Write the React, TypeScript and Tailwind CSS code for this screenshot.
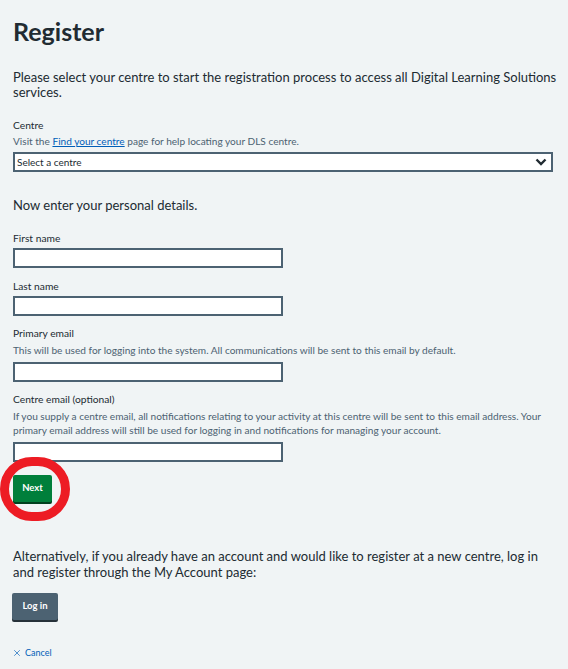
import React from 'react';
import { X } from 'lucide-react';

const font = { fontFamily: 'Lato, "Noto Sans", Arial, sans-serif' };

const Field: React.FC<{ label: string; hint?: string; gap: string }> = ({ label, hint, gap }) => (
  <div className={gap}>
    <label className="block text-[10.25px] leading-[14px] text-[#212b32]">{label}</label>
    {hint && <p className="mt-[3px] text-[10.1px] leading-[14px] text-[#4c6272]">{hint}</p>}
    <input className={`${hint ? 'mt-[5px]' : 'mt-[3px]'} block h-[20px] w-[270px] border-2 border-[#4c6272] bg-white`} />
  </div>
);

export default function App() {
  return (
    <div className="min-h-[669px] bg-[#f0f4f5] px-[13px] pt-[15px] text-[#212b32]" style={font}>
      <h1 className="text-[25px] font-bold leading-[32px]">Register</h1>

      <p className="mt-[23px] w-[548px] text-[13px] leading-[15px]">
        Please select your centre to start the registration process to access all Digital Learning Solutions
        services.
      </p>

      {/* Centre */}
      <div className="mt-[18px]">
        <label className="block text-[10.25px] leading-[14px]">Centre</label>
        <p className="mt-[2px] text-[10.1px] leading-[14px] text-[#4c6272]">
          Visit the{' '}
          <a href="#" className="text-[#005eb8] underline">
            Find your centre
          </a>{' '}
          page for help locating your DLS centre.
        </p>
        <div className="mt-[4px] flex h-[20px] w-[540px] items-center justify-between border-2 border-[#4c6272] bg-white pl-[2px] pr-[4px] text-[10px]">
          <span>Select a centre</span>
          <svg width="12" height="8" viewBox="0 0 12 8" className="text-[#212b32]">
            <polyline points="1.5,1.5 6,6 10.5,1.5" fill="none" stroke="currentColor" strokeWidth="2.4" />
          </svg>
        </div>
      </div>

      <p className="mt-[26px] text-[13px] leading-[15px]">Now enter your personal details.</p>

      <Field label="First name" gap="mt-[18px]" />
      <Field label="Last name" gap="mt-[11px]" />
      <Field
        label="Primary email"
        gap="mt-[10px]"
        hint="This will be used for logging into the system. All communications will be sent to this email by default."
      />
      <Field
        label="Centre email (optional)"
        gap="mt-[10px]"
        hint="If you supply a centre email, all notifications relating to your activity at this centre will be sent to this email address. Your primary email address will still be used for logging in and notifications for managing your account."
      />

      {/* Next */}
      <div className="relative mt-[13px] w-fit">
        <button className="block h-[27px] w-[39px] rounded-[2px] bg-[#007f3b] text-[9.5px] font-bold text-white shadow-[0_2px_0_#00401e]">
          Next
        </button>
        <div className="pointer-events-none absolute left-[-13px] top-[-18px] h-[64px] w-[70px] rounded-full border-[9px] border-[#ed1c24]" />
      </div>

      <p className="mt-[46px] w-[548px] text-[13px] leading-[16px]">
        Alternatively, if you already have an account and would like to register at a new centre, log in and
        register through the My Account page:
      </p>

      <button className="mt-[13px] ml-[-1px] block h-[27px] w-[46px] rounded-[2px] bg-[#4c6272] text-[9.5px] font-bold text-white shadow-[0_2px_0_#263139]">
        Log in
      </button>

      <a href="#" className="mt-[27px] flex w-fit items-center gap-[3px] text-[9px] leading-[12px] text-[#005eb8]">
        <X size={10} strokeWidth={1.6} className="ml-[-1px]" />
        Cancel
      </a>
    </div>
  );
}
